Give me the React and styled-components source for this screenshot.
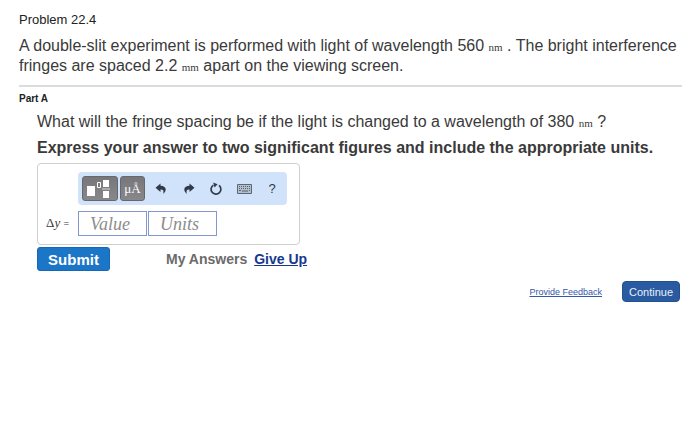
import React from "react";
import styled, { createGlobalStyle } from "styled-components";

const GlobalStyle = createGlobalStyle`
  * { box-sizing: border-box; }
  body {
    margin: 0;
    background: #fff;
    color: #3a3a3a;
    font-family: "Liberation Sans", Arial, sans-serif;
  }
`;

const Page = styled.main`
  padding: 12px 18px 12px 19px;
`;

const ProblemTitle = styled.h1`
  margin: 0;
  font-size: 13px;
  font-weight: 400;
  line-height: 16px;
  color: #222;
`;

const Statement = styled.p`
  margin: 8px 0 0;
  font-size: 16px;
  line-height: 20px;
`;

const Unit = styled.span`
  font-family: "Liberation Serif", "Times New Roman", serif;
  font-size: 11px;
  line-height: 1;
`;

const Divider = styled.hr`
  margin: 9px 0 0;
  border: 0;
  border-top: 2px solid #dcdcdc;
`;

const PartTitle = styled.h2`
  margin: 4px 0 0;
  font-size: 10px;
  font-weight: 700;
  line-height: 16px;
  color: #222;
`;

const PartBody = styled.form`
  padding-left: 18px;
`;

const Question = styled.p`
  margin: 5px 0 0;
  font-size: 16px;
  line-height: 20px;
`;

const Instruction = styled.p`
  margin: 6px 0 0;
  font-size: 16px;
  font-weight: 700;
  line-height: 20px;
`;

const AnswerBox = styled.div`
  display: grid;
  grid-template-columns: 40px 209px;
  row-gap: 6px;
  width: fit-content;
  margin-top: 5px;
  padding: 8px 12px 8px 0;
  border: 1px solid #cfcfcf;
  border-radius: 4px;
`;

const Toolbar = styled.div`
  grid-column: 2;
  display: flex;
  align-items: center;
  height: 33px;
  padding: 0 1px 0 4px;
  border-radius: 4px;
  background: #d0e3fb;
`;

const TemplateButton = styled.button`
  display: flex;
  align-items: center;
  justify-content: center;
  width: ${(p) => (p.$wide ? 36 : 25)}px;
  height: 25px;
  margin-right: 2px;
  padding: 0;
  border: 1px solid #68686c;
  border-radius: 3px;
  background: linear-gradient(#77777b, #88888c);
  color: #fff;
  font-family: "Liberation Serif", "Times New Roman", serif;
  font-size: 13px;
  line-height: 16px;
`;

const ToolButtons = styled.div`
  flex: 1;
  display: grid;
  grid-template-columns: repeat(5, 1fr);
`;

const ToolButton = styled.button`
  display: flex;
  align-items: center;
  justify-content: center;
  height: 25px;
  padding: 0;
  border: 0;
  background: none;
  color: #303a48;
  font-family: inherit;
  font-size: 13px;
`;

const VariableLabel = styled.label`
  align-self: center;
  padding-left: 8px;
  font-family: "Liberation Serif", "Times New Roman", serif;
  font-size: 13px;
  line-height: 16px;
  white-space: nowrap;
`;

const Equals = styled.span`
  font-size: 10px;
`;

const Fields = styled.div`
  display: flex;
  gap: 1px;
`;

const Field = styled.input`
  width: 69px;
  height: 25px;
  padding: 2px 11px 0;
  border: 1px solid #8296cf;
  border-radius: 0;
  background: #fff;
  font-family: "Liberation Serif", "Times New Roman", serif;
  font-size: 18px;
  font-style: italic;

  &::placeholder {
    color: #8c8c8c;
    opacity: 1;
  }
`;

const Actions = styled.div`
  display: flex;
  align-items: center;
  margin-top: 2px;
  font-size: 14px;
  font-weight: 700;
`;

const SubmitButton = styled.button`
  width: 73px;
  height: 24px;
  margin-right: 56px;
  padding: 0;
  border: 1px solid #1568b5;
  border-radius: 3px;
  background: #1b76c8;
  color: #fff;
  font-family: inherit;
  font-size: 15px;
  font-weight: 700;
`;

const MyAnswers = styled.span`
  margin-right: 7px;
  color: #6b6b6b;
`;

const TextLink = styled.a`
  color: #17388f;
`;

const Footer = styled.footer`
  display: flex;
  align-items: center;
  justify-content: flex-end;
  gap: 20px;
  margin-top: 10px;
  padding-right: 2px;
`;

const FeedbackLink = styled.a`
  color: #3558a8;
  font-size: 9px;
`;

const ContinueButton = styled.button`
  width: 58px;
  height: 21px;
  padding: 0;
  border: 1px solid #23508f;
  border-radius: 4px;
  background: #2a5ba0;
  color: #e8f0fa;
  font-family: inherit;
  font-size: 11px;
`;

const FractionIcon = () => (
  <svg width="26" height="21" viewBox="0 0 26 21" aria-hidden="true">
    <path d="M0 8h8v10H0zM16 2h6v7h-6zM16 13h6v7h-6z" fill="#fff" />
    <path d="M10.5 4.5h3v5h-3z" fill="none" stroke="#fff" />
    <path d="M15 11h8" stroke="#d5d5d8" />
  </svg>
);

const CurvedArrow = ({ flip }) => (
  <svg width="12" height="12" viewBox="0 0 12 12" aria-hidden="true">
    <path
      d="M5.5 .5.5 4.7l5 4.3V6.6C8 6.4 9 7.6 8.2 11 12.4 7.4 11.2 2.8 5.5 2.7z"
      fill="currentColor"
      transform={flip ? "matrix(-1 0 0 1 12 0)" : undefined}
    />
  </svg>
);

const ResetIcon = () => (
  <svg width="14" height="14" viewBox="0 0 14 14" aria-hidden="true">
    <path d="M10 3.4A4.9 4.9 0 1 1 4.4 3.1" fill="none" stroke="currentColor" strokeWidth="1.7" />
    <path d="M4.2.6 8.6 2.2 5.6 5.4z" fill="currentColor" />
  </svg>
);

const KeyboardIcon = () => (
  <svg width="15" height="10" viewBox="0 0 15 10" aria-hidden="true">
    <path d="M.5.5h14v9H.5z" fill="#b4bfcd" stroke="#5d6876" />
    <path d="M2 2.5h11M2 4.5h11" stroke="#566170" strokeDasharray="1 1" />
    <path d="M2 6.5h2M5 7h6M12 6.5h1" stroke="#566170" />
  </svg>
);

export default function App() {
  return (
    <>
      <GlobalStyle />
      <Page>
        <ProblemTitle>Problem 22.4</ProblemTitle>
        <Statement>
          A double-slit experiment is performed with light of wavelength 560 <Unit>nm</Unit> . The
          bright interference fringes are spaced 2.2 <Unit>mm</Unit> apart on the viewing screen.
        </Statement>
        <Divider />
        <PartTitle>Part A</PartTitle>
        <PartBody onSubmit={(e) => e.preventDefault()}>
          <Question>
            What will the fringe spacing be if the light is changed to a wavelength of 380{" "}
            <Unit>nm</Unit> ?
          </Question>
          <Instruction>
            Express your answer to two significant figures and include the appropriate units.
          </Instruction>
          <AnswerBox>
            <Toolbar role="toolbar" aria-label="Answer tools">
              <TemplateButton type="button" $wide aria-label="Templates">
                <FractionIcon />
              </TemplateButton>
              <TemplateButton type="button">μÅ</TemplateButton>
              <ToolButtons>
                <ToolButton type="button" aria-label="Undo"><CurvedArrow /></ToolButton>
                <ToolButton type="button" aria-label="Redo"><CurvedArrow flip /></ToolButton>
                <ToolButton type="button" aria-label="Reset"><ResetIcon /></ToolButton>
                <ToolButton type="button" aria-label="Keyboard"><KeyboardIcon /></ToolButton>
                <ToolButton type="button">?</ToolButton>
              </ToolButtons>
            </Toolbar>
            <VariableLabel htmlFor="value">
              Δ<i>y</i> <Equals>=</Equals>
            </VariableLabel>
            <Fields>
              <Field id="value" placeholder="Value" />
              <Field aria-label="Units" placeholder="Units" />
            </Fields>
          </AnswerBox>
          <Actions>
            <SubmitButton type="submit">Submit</SubmitButton>
            <MyAnswers>My Answers</MyAnswers>
            <TextLink href="#give-up">Give Up</TextLink>
          </Actions>
        </PartBody>
        <Footer>
          <FeedbackLink href="#feedback">Provide Feedback</FeedbackLink>
          <ContinueButton type="button">Continue</ContinueButton>
        </Footer>
      </Page>
    </>
  );
}
